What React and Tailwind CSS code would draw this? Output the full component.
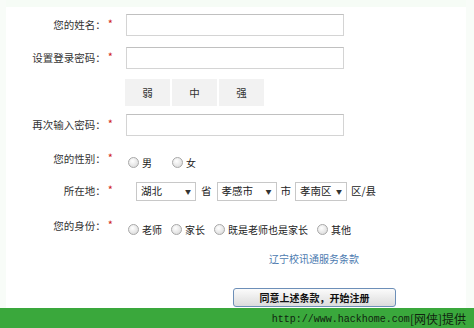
import React from "react";

const cjk = { fontFamily: '"Noto Sans CJK SC", "Noto Sans", sans-serif' };

function Label({ text }) {
  return (
    <div className="flex w-[126px] shrink-0 items-center justify-end pr-[13px]">
      <span className="text-[10.5px] text-[#333]">{text}</span>
      <span className="ml-[2px] -mt-[4px] text-[11px] text-[#d02020]">*</span>
    </div>
  );
}

function Input() {
  return <div className="h-[22px] w-[218px] border border-[#d4d4d4] border-t-[#c0c0c0] bg-white" />;
}

function Radio({ label, gap = "mr-[9px]" }) {
  return (
    <span className={`inline-flex items-center ${gap}`}>
      <span className="mr-[3px] h-[11px] w-[11px] rounded-full border border-[#a8a8a8] bg-[radial-gradient(circle_at_40%_35%,#ffffff,#d4d4d4)]" />
      <span className="text-[10px] text-[#222]">{label}</span>
    </span>
  );
}

function Select({ value, width }) {
  return (
    <div
      className={`flex h-[19px] items-center justify-between overflow-hidden whitespace-nowrap border border-[#c8c8c8] bg-white pl-[4px] pr-[4px] ${width}`}
    >
      <span className="text-[10.5px] text-[#222]">{value}</span>
      <span className="text-[6px] text-[#333]">▼</span>
    </div>
  );
}

export default function App() {
  return (
    <div className="relative h-[328px] w-[474px] overflow-hidden bg-white" style={cjk}>
      <div className="absolute inset-x-0 top-0 h-[7px] bg-[#f6fcf6]" />
      <div className="absolute left-0 top-0 h-full w-[6px] bg-[#f8fcf8]" />
      <div className="absolute right-0 top-0 h-full w-[8px] bg-[#f8fcf8]" />

      <div className="relative flex flex-col pt-[14px]">
        <div className="flex h-[22px] items-center">
          <Label text="您的姓名：" />
          <Input />
        </div>

        <div className="mt-[11px] flex h-[22px] items-center">
          <Label text="设置登录密码：" />
          <Input />
        </div>

        <div className="mt-[10px] flex h-[27px] pl-[125px]">
          {["弱", "中", "强"].map((t) => (
            <div key={t} className="mr-[2px] flex w-[45px] items-center justify-center bg-[#f2f2f2] text-[10.5px] text-[#333]">
              {t}
            </div>
          ))}
        </div>

        <div className="mt-[8px] flex h-[22px] items-center">
          <Label text="再次输入密码：" />
          <Input />
        </div>

        <div className="mt-[13px] flex h-[20px] items-center">
          <Label text="您的性别：" />
          <div className="flex items-center pl-[2px] pt-[6px]">
            <Radio label="男" gap="mr-[20px]" />
            <Radio label="女" />
          </div>
        </div>

        <div className="mt-[12px] flex h-[20px] items-center">
          <Label text="所在地：" />
          <div className="flex items-center pl-[10px] text-[10.5px] text-[#222]">
            <Select value="湖北" width="w-[60px]" />
            <span className="mx-[5px]">省</span>
            <Select value="孝感市" width="w-[60px]" />
            <span className="mx-[4px]">市</span>
            <Select value="孝南区" width="w-[52px]" />
            <span className="ml-[4px]">区/县</span>
          </div>
        </div>

        <div className="mt-[15px] flex h-[20px] items-center">
          <Label text="您的身份：" />
          <div className="flex items-center pl-[2px] pt-[6px]">
            <Radio label="老师" />
            <Radio label="家长" />
            <Radio label="既是老师也是家长" />
            <Radio label="其他" />
          </div>
        </div>

        <div className="mt-[13px] flex h-[18px] items-center pl-[269px]">
          <span className="text-[10px] text-[#4d7bb0]">辽宁校讯通服务条款</span>
        </div>

        <div className="mt-[21px] flex pl-[233px]">
          <button className="flex h-[19px] w-[163px] items-center justify-center rounded-[3px] border border-[#6d8fb8] bg-[linear-gradient(#fbfbfb,#dcdcdc)] text-[10px] font-bold text-[#111]">
            同意上述条款，开始注册
          </button>
        </div>

        <div className="mt-[1px] flex h-[22px] items-center justify-end bg-[#3aa83c] pr-[8px] text-[#10230f]">
          <span className="text-[10px]" style={{ fontFamily: '"Liberation Mono", monospace' }}>
            http://www.hackhome.com
          </span>
          <span className="text-[12px]">[网侠]提供</span>
        </div>
      </div>
    </div>
  );
}
